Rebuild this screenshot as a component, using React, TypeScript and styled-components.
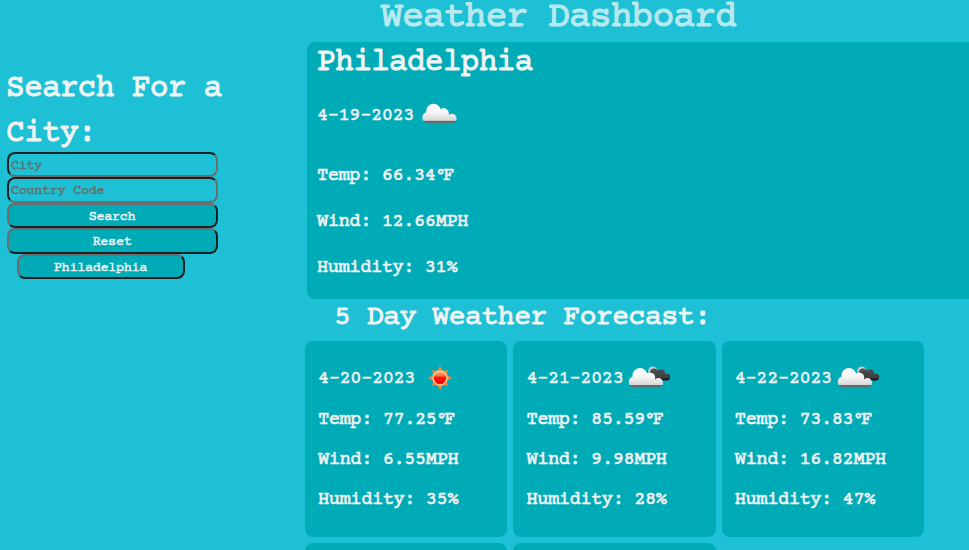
import React from "react";
import styled, { createGlobalStyle } from "styled-components";

const GlobalStyle = createGlobalStyle`
  *, *::before, *::after { box-sizing: border-box; }
  html, body { margin: 0; height: 100%; overflow: hidden; background: #1dc0d5; }
  body, input, button, h1, h2, p {
    font-family: "Courier Prime", "Liberation Mono", "Courier New", monospace;
    font-weight: 400;
    letter-spacing: -0.0275em;
    -webkit-text-stroke: 0.032em currentColor;
  }
`;

const Page = styled.div`
  display: flex;
  height: 550px;
  overflow: hidden;
  color: #f0f3f4;
  background: #1dc0d5;
`;

const Sidebar = styled.aside`
  flex: 0 0 305px;
  padding: 67px 0 0 6px;
`;

const SearchTitle = styled.h2`
  margin: 0;
  width: 230px;
  height: 85px;
  font-size: 31.4px;
  line-height: 45px;
`;

const Form = styled.form`
  display: flex;
  flex-direction: column;
  width: 211px;
  margin-left: 1px;
`;

const Field = styled.input`
  height: 25.4px;
  padding: 2px 2px 0;
  border: 2px solid;
  border-color: #1d1f20 #6b6e70 #6b6e70 #1d1f20;
  border-radius: 8px;
  background: transparent;
  font-size: 13.6px;
  color: #f0f3f4;
  &::placeholder { color: #65716f; opacity: 1; }
`;

const Button = styled.button<{ $history?: boolean }>`
  height: 25.4px;
  width: ${(p) => (p.$history ? "168px" : "100%")};
  margin-left: ${(p) => (p.$history ? "10px" : "0")};
  padding: 2px 1px 0 0;
  border: 2px solid;
  border-color: #6b6e70 #1d1f20 #1d1f20 #6b6e70;
  border-radius: 8px;
  background: #00abb8;
  color: #f0f3f4;
  font-size: 13.6px;
  line-height: 20px;
`;

const Main = styled.main`
  flex: 0 0 664px;
  display: flex;
  flex-direction: column;
`;

const Title = styled.h1`
  flex: none;
  margin: 0;
  height: 42px;
  padding-left: 76px;
  font-size: 36.5px;
  line-height: 35px;
  color: #b9e8ee;
`;

const Current = styled.section`
  flex: none;
  height: 257px;
  margin-left: 2px;
  padding-left: 10px;
  border-radius: 8px 0 0 8px;
  background: #00abb8;
`;

const CityName = styled.h2`
  margin: 0;
  height: 49px;
  font-size: 31.4px;
  line-height: 43px;
`;

const DateRow = styled.div<{ $height: number }>`
  display: flex;
  align-items: center;
  height: ${(p) => p.$height}px;
  font-size: 18.8px;
  letter-spacing: -0.48px;
  white-space: pre;
`;

const Reading = styled.p<{ $height: number }>`
  margin: 0;
  font-size: 18.8px;
  letter-spacing: -0.48px;
  line-height: ${(p) => p.$height}px;
  white-space: pre;
`;

const Degree = styled.span`
  letter-spacing: -3.8px;
`;

const CurrentReadings = styled.div`
  padding-top: 14px;
`;

const ForecastTitle = styled.h2`
  flex: none;
  margin: 0;
  height: 42px;
  padding-left: 29px;
  font-size: 28.6px;
  line-height: 39px;
`;

const Cards = styled.section`
  display: grid;
  grid-template-columns: repeat(3, 202.4px);
  grid-auto-rows: 196px;
  gap: 6px;
`;

const Card = styled.article`
  padding: 16px 0 0 13px;
  border-radius: 8px;
  background: #00abb8;
`;

const CardReadings = styled.div`
  padding-top: 1px;
`;

const Icon = styled.svg`
  flex: none;
  width: 50px;
  height: 50px;
`;

type Kind = "cloud" | "sun" | "broken";

function WeatherIcon({ kind }: { kind: Kind }) {
  const id = React.useId();
  if (kind === "sun") {
    return (
      <Icon viewBox="0 0 50 50" aria-hidden>
        <defs>
          <linearGradient id={id} x2="0" y2="1">
            <stop offset="0" stopColor="#ffb06b" />
            <stop offset=".36" stopColor="#fb7138" />
            <stop offset=".44" stopColor="#ff1713" />
            <stop offset="1" stopColor="#ff0007" />
          </linearGradient>
        </defs>
        <polygon
          fill="#f0883e"
          transform="translate(25 25)"
          points="0,-12 2.9,-6.9 7.9,-7.9 6.9,-2.9 12,0 6.9,2.9 7.9,7.9 2.9,6.9 0,12 -2.9,6.9 -7.9,7.9 -6.9,2.9 -12,0 -6.9,-2.9 -7.9,-7.9 -2.9,-6.9"
        />
        <circle cx="25" cy="25" r="6.9" fill={`url(#${id})`} stroke="#ffdca4" strokeWidth="1.2" />
      </Icon>
    );
  }
  return (
    <Icon viewBox="0 0 50 50" aria-hidden>
      <defs>
        <linearGradient id={id} gradientUnits="userSpaceOnUse" x1="0" y1="13" x2="0" y2="33">
          <stop offset="0" stopColor="#fff" />
          <stop offset=".4" stopColor="#fafafa" />
          <stop offset=".87" stopColor="#d8d8d8" />
          <stop offset=".9" stopColor="#656b6c" />
          <stop offset="1" stopColor="#656b6c" />
        </linearGradient>
        <linearGradient id={`${id}d`} gradientUnits="userSpaceOnUse" x1="0" y1="14" x2="0" y2="27.5">
          <stop offset="0" stopColor="#555" />
          <stop offset=".84" stopColor="#3c3c3c" />
          <stop offset=".86" stopColor="#1c1c1c" />
          <stop offset="1" stopColor="#1c1c1c" />
        </linearGradient>
      </defs>
      {kind === "broken" && (
        <>
          <circle cx="29.7" cy="18" r="4.5" fill="#c5caca" />
          <g fill={`url(#${id}d)`}>
            <circle cx="31" cy="19.8" r="4.2" />
            <circle cx="38" cy="20.5" r="4.3" />
            <circle cx="43.8" cy="24.1" r="3.4" />
            <rect x="27" y="19" width="11" height="8.5" />
            <rect x="37" y="21" width="7" height="6.5" />
          </g>
        </>
      )}
      <g fill={`url(#${id})`} transform={kind === "broken" ? "translate(-2.6 1.3)" : undefined}>
        <circle cx="19.5" cy="21.2" r="7.4" />
        <circle cx="13.8" cy="27.5" r="5.5" />
        <circle cx="29.6" cy="23.4" r="5.3" />
        <circle cx="38" cy="28.4" r="4.6" />
        <rect x="13.8" y="23" width="20.8" height="10" />
        <rect x="34" y="26" width="4" height="7" />
        <rect x="23" y="20.5" width="6" height="6" />
      </g>
    </Icon>
  );
}

interface Weather {
  date: string;
  icon: Kind;
  temp: string;
  wind: string;
  humidity: string;
}

const current: Weather = { date: "4-19-2023", icon: "cloud", temp: "66.34", wind: "12.66", humidity: "31" };

const forecast: Weather[] = [
  { date: "4-20-2023", icon: "sun", temp: "77.25", wind: "6.55", humidity: "35" },
  { date: "4-21-2023", icon: "broken", temp: "85.59", wind: "9.98", humidity: "28" },
  { date: "4-22-2023", icon: "broken", temp: "73.83", wind: "16.82", humidity: "47" },
];

function Readings({ data, height }: { data: Weather; height: number }) {
  return (
    <>
      <Reading $height={height}>
        Temp: {data.temp}
        <Degree>°</Degree>F
      </Reading>
      <Reading $height={height}>Wind: {data.wind}MPH</Reading>
      <Reading $height={height}>Humidity: {data.humidity}%</Reading>
    </>
  );
}

export default function App() {
  return (
    <>
      <GlobalStyle />
      <Page>
        <Sidebar>
          <SearchTitle>Search For a City:</SearchTitle>
          <Form onSubmit={(e) => e.preventDefault()}>
            <Field placeholder="City" />
            <Field placeholder="Country Code" />
            <Button type="submit">Search</Button>
            <Button type="reset">Reset</Button>
            <Button type="button" $history>
              Philadelphia
            </Button>
          </Form>
        </Sidebar>
        <Main>
          <Title>Weather Dashboard</Title>
          <Current>
            <CityName>Philadelphia</CityName>
            <DateRow $height={48}>
              {current.date}
              <WeatherIcon kind={current.icon} />
            </DateRow>
            <CurrentReadings>
              <Readings data={current} height={46} />
            </CurrentReadings>
          </Current>
          <ForecastTitle>5 Day Weather Forecast:</ForecastTitle>
          <Cards>
            {forecast.map((day) => (
              <Card key={day.date}>
                <DateRow $height={42}>
                  {day.date}
                  <WeatherIcon kind={day.icon} />
                </DateRow>
                <CardReadings>
                  <Readings data={day} height={40} />
                </CardReadings>
              </Card>
            ))}
            <Card />
            <Card />
          </Cards>
        </Main>
      </Page>
    </>
  );
}
